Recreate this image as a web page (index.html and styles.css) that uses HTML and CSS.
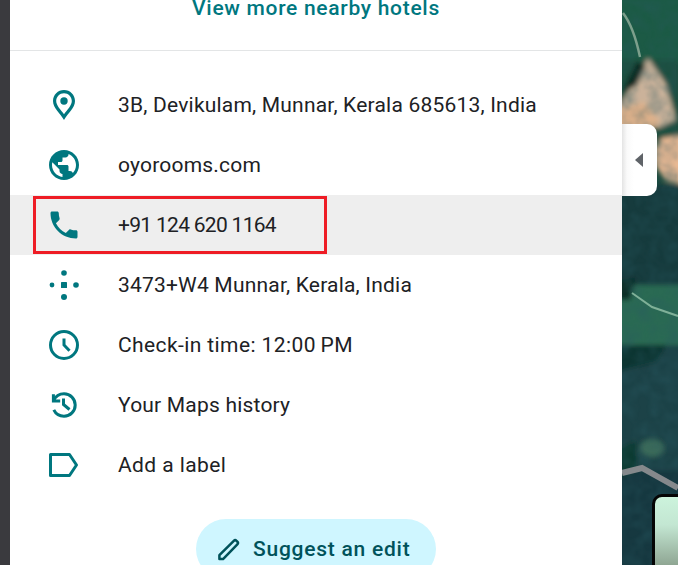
FILE: index.html
```html
<!DOCTYPE html>
<html lang="en">
<head>
<meta charset="utf-8">
<title>Place details</title>
<link rel="stylesheet" href="styles.css">
</head>
<body>
<div class="app">
  <div class="edge"></div>
  <main class="panel">
    <div class="more"><a class="more-link">View more nearby hotels</a></div>
    <ul class="rows">
      <li class="row">
        <svg class="icon" viewBox="0 0 30 30"><path class="f" fill-rule="evenodd" d="M15 0C8.900 0 4 4.900 4 11c0 7 7 12 11 19 4-7 11-12 11-19C26 4.900 21.100 0 15 0zm0 3.200c4.300 0 7.800 3.500 7.800 7.800 0 4.500-4.600 8.800-7.800 13.200-3.200-4.400-7.800-8.700-7.800-13.200 0-4.300 3.500-7.800 7.800-7.800z"/><circle class="f" cx="15" cy="11" r="3.700"/></svg>
        <span class="label">3B, Devikulam, Munnar, Kerala 685613, India</span>
      </li>
      <li class="row">
        <svg class="icon" viewBox="2 2 20 20"><path class="f" d="M12 2C6.480 2 2 6.480 2 12s4.480 10 10 10 10-4.480 10-10S17.520 2 12 2zm-1 17.930c-3.950-.49-7-3.850-7-7.930 0-.62.08-1.210.21-1.790L9 15v1c0 1.100.9 2 2 2v1.930zm6.900-2.540c-.26-.81-1-1.390-1.900-1.390h-1v-3c0-.55-.45-1-1-1H8v-2h2c.55 0 1-.45 1-1V7h2c1.100 0 2-.9 2-2v-.41c2.930 1.190 5 4.060 5 7.410 0 2.080-.8 3.970-2.100 5.390z"/></svg>
        <span class="label">oyorooms.com</span>
      </li>
      <li class="row row-active">
        <svg class="icon" viewBox="2 2 20 20"><path class="f" d="M6.620 10.790c1.440 2.830 3.760 5.140 6.590 6.590l2.200-2.200c.27-.27.67-.36 1.020-.24 1.120.37 2.330.57 3.570.57.55 0 1 .45 1 1V20c0 .55-.45 1-1 1-9.390 0-17-7.610-17-17 0-.55.45-1 1-1h3.500c.55 0 1 .45 1 1 0 1.250.2 2.450.57 3.570.11.35.03.74-.25 1.020l-2.200 2.200z"/></svg>
        <span class="label label-phone">+91 124 620 1164</span>
      </li>
      <li class="row">
        <svg class="icon" viewBox="0 0 30 30"><circle class="f" cx="15" cy="3" r="2.800"/><circle class="f" cx="3" cy="15" r="2.400"/><rect class="f" x="12" y="12" width="6" height="6" rx=".6"/><circle class="f" cx="27" cy="15" r="2.800"/><circle class="f" cx="15" cy="27" r="3"/></svg>
        <span class="label">3473+W4 Munnar, Kerala, India</span>
      </li>
      <li class="row">
        <svg class="icon" viewBox="0 0 30 30"><circle class="s" cx="15" cy="15" r="13.500"/><path class="s" d="M15 8.500V15l5.500 5.800"/></svg>
        <span class="label label-wide">Check-in time: 12:00&#8201;PM</span>
      </li>
      <li class="row">
        <svg class="icon" viewBox="0 0 30 30"><path class="s" d="M4.400 4.200v6.800h6.800"/><path class="s" d="M4.600 10.600C6.500 6.500 10.400 3.800 15 3.800c6.300 0 11.200 5 11.200 11.200S21.300 26.200 15 26.200c-4.500 0-8.400-2.600-10.200-6.300"/><path class="s" d="M14.500 8.500v6l6 5"/></svg>
        <span class="label">Your Maps history</span>
      </li>
      <li class="row">
        <svg class="icon" viewBox="0 0 30 30"><path class="s s-join" d="M1.500 4.500h19l7 10.500-7 10.500h-19z"/></svg>
        <span class="label label-wide">Add a label</span>
      </li>
    </ul>
    <div class="actions">
      <button class="suggest" type="button">
        <svg class="pencil" viewBox="0 0 25 25"><path d="M2.500 23v-4L17.500 4a2 2 0 0 1 2.800 0l.9.900a2 2 0 0 1 0 2.800L6.300 23z"/></svg>
        <span>Suggest an edit</span>
      </button>
    </div>
  </main>
  <section class="map">
    <svg class="map-art" viewBox="0 0 56 565" preserveAspectRatio="none">
      <defs>
        <filter id="blur" x="-20%" y="-5%" width="140%" height="110%"><feGaussianBlur stdDeviation="2.600"/></filter>
        <filter id="blur2" x="-20%" y="-5%" width="140%" height="110%"><feGaussianBlur stdDeviation=".7"/></filter>
        <filter id="grain" x="0" y="0" width="100%" height="100%">
          <feTurbulence type="fractalNoise" baseFrequency=".07" numOctaves="3" seed="7"/>
          <feColorMatrix type="matrix" values="0 0 0 0 .02  0 0 0 0 .1  0 0 0 0 .12  1.600 1.600 0 0 -1.300"/>
          <feGaussianBlur stdDeviation=".8"/>
        </filter>
      </defs>
      <rect width="56" height="565" fill="#1c4a3f"/>
      <g filter="url(#blur)">
        <rect x="-10" y="-10" width="76" height="75" fill="#1d5a45"/>
        <rect x="-10" y="185" width="76" height="100" fill="#153a3e"/>
        <rect x="-10" y="285" width="76" height="60" fill="#2a6a52"/>
        <rect x="-10" y="345" width="76" height="130" fill="#1b4246"/>
        <rect x="-10" y="470" width="76" height="105" fill="#17393f"/>
        <path d="M-6 60H56V140H-6Z" fill="#1f4f3f"/>
        <path d="M-4 108 10 86 26 58 44 84 54 120 36 128 20 118-4 124Z" fill="#cbb29a"/>
        <path d="M-6 110 22 102 38 122 22 134-6 134Z" fill="#dcb08a"/>
        <path d="M32 150 40 138 66 134V186L44 180 34 166Z" fill="#e8b893"/>
        <path d="M-6 345H45L35 362-6 372Z" fill="#0f3530"/>
        <ellipse cx="30" cy="448" rx="12" ry="9" fill="#3a6a5a"/>
        <path d="M-6 450 14 440 16 470-6 480Z" fill="#0f3a30"/>
        <path d="M14 62 24 66 14 86 0 92Z" fill="#0c2a22"/>
        <path d="M-6 280 14 278 8 300-6 300Z" fill="#0c2d26"/>
      </g>
      <rect width="56" height="565" filter="url(#grain)" opacity=".35"/>
      <g filter="url(#blur2)">
        <path d="M1 13C8 22 14 38 18 57" fill="none" stroke="#7d9f8c" stroke-width="2.500"/>
        <path d="M10 293 30 307 56 316" fill="none" stroke="#7fb098" stroke-width="2"/>
        <path d="M0 473 20 468 56 488" fill="none" stroke="#85898c" stroke-width="6"/>
      </g>
    </svg>
    <div class="thumb"></div>
    <button class="collapse" type="button" aria-label="Collapse side panel"><span class="caret"></span></button>
  </section>
  <div class="callout"></div>
</div>
</body>
</html>
```

FILE: styles.css
```css
* { box-sizing: border-box; }

html, body {
  margin: 0;
  height: 100%;
  overflow: hidden;
}

body {
  font-family: Roboto, "Noto Sans", sans-serif;
  color: #202124;
  background: #fff;
}

.app {
  position: relative;
  display: flex;
  height: 565px;
  width: 678px;
  overflow: hidden;
}

.edge {
  flex: 0 0 10px;
  background: #3a3a3e;
}

.panel {
  flex: 0 0 612px;
  background: #fff;
  display: flex;
  flex-direction: column;
}

.more {
  flex: none;
  height: 59px;
  margin-top: -8px;
  padding-top: 4px;
  border-bottom: 1px solid #e3e5e6;
  text-align: center;
}

.more-link {
  font-size: 21px;
  line-height: 24px;
  font-weight: 500;
  color: #00777f;
  letter-spacing: .7px;
}

.rows {
  list-style: none;
  margin: 24px 0 0;
  padding: 0;
}

.row {
  display: flex;
  align-items: center;
  height: 60px;
  padding-left: 39px;
}

.row-active {
  background: #eeeeee;
}

.icon {
  flex: none;
  width: 30px;
  height: 30px;
  margin-right: 39px;
}

.f { fill: #00777f; }

.s {
  fill: none;
  stroke: #00777f;
  stroke-width: 3;
}

.s-join { stroke-linejoin: round; }

.label {
  font-size: 21px;
  line-height: 28px;
  margin-top: -1px;
  white-space: nowrap;
  letter-spacing: .2px;
}

.label-phone { letter-spacing: -.7px; }
.label-wide { letter-spacing: .4px; }

.actions {
  display: flex;
  justify-content: center;
  margin-top: 24px;
}

.suggest {
  display: flex;
  align-items: center;
  gap: 12px;
  width: 240px;
  height: 60px;
  padding: 0 0 0 21px;
  border: 0;
  border-radius: 30px;
  background: #cff6ff;
  color: #00525a;
  font: 500 21px/30px Roboto, "Noto Sans", sans-serif;
  letter-spacing: .75px;
}

.pencil {
  width: 24px;
  height: 24px;
  flex: none;
  fill: none;
  stroke: #00525a;
  stroke-width: 2.600;
  stroke-linejoin: round;
}

.map {
  flex: 1;
  position: relative;
  background: #1c4a3f;
}

.map-art {
  display: block;
  width: 56px;
  height: 565px;
}

.collapse {
  position: absolute;
  left: 0;
  top: 124px;
  width: 35px;
  height: 72px;
  padding: 0;
  border: 0;
  border-radius: 0 10px 10px 0;
  background: linear-gradient(90deg, #e4e4e4 0, #fafafa 5px, #fff 12px);
  display: flex;
  align-items: center;
  justify-content: center;
}

.caret {
  width: 0;
  height: 0;
  margin-left: -2px;
  border-style: solid;
  border-width: 7px 8px 7px 0;
  border-color: transparent #5f6368 transparent transparent;
}

.thumb {
  position: absolute;
  left: 30px;
  top: 494px;
  width: 60px;
  height: 90px;
  border: 3px solid #050505;
  border-radius: 10px;
  background: linear-gradient(180deg, #ccf3dc 0, #c3e6d2 28px, #8fa693 68px);
}

.callout {
  position: absolute;
  left: 33px;
  top: 196px;
  width: 294px;
  height: 58px;
  border: 3px solid #ee1c25;
  pointer-events: none;
}
```
